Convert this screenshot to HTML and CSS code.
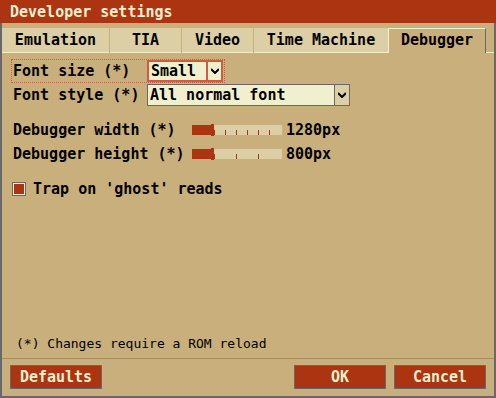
FILE: index.html
```html
<!DOCTYPE html>
<html lang="en">
<head>
  <meta charset="UTF-8" />
  <title>Developer settings</title>
  <link rel="stylesheet" href="styles.css">
</head>
<body>

  <div class="dialog">
    <div class="titlebar">Developer settings</div>

    <div class="frame">
      <div class="tabs">
        <div class="tab tab-emu">Emulation</div>
        <div class="tab tab-tia">TIA</div>
        <div class="tab tab-video">Video</div>
        <div class="tab tab-tm">Time Machine</div>
        <div class="tab tab-dbg active">Debugger</div>
        <div class="tab-fill"></div>
      </div>

      <div class="panel">
        <div class="row row-focus">
          <span class="label label-select">Font size (*)</span>
          <div class="select select-small focused">
            <span class="select-value">Small</span>
            <span class="select-arrow">
              <svg width="8" height="6" viewBox="0 0 8 6"><path d="M0 1 L4 5 L8 1" fill="none" stroke="#000" stroke-width="2"/></svg>
            </span>
          </div>
        </div>

        <div class="row row-style">
          <span class="label label-select">Font style (*)</span>
          <div class="select select-wide">
            <span class="select-value">All normal font</span>
            <span class="select-arrow">
              <svg width="8" height="6" viewBox="0 0 8 6"><path d="M0 1 L4 5 L8 1" fill="none" stroke="#000" stroke-width="2"/></svg>
            </span>
          </div>
        </div>

        <div class="row row-slider first-slider">
          <span class="label label-slider">Debugger width (*)</span>
          <div class="slider">
            <div class="ticks">
              <i></i><i></i><i></i><i></i><i></i><i></i><i></i>
            </div>
            <div class="fill" style="width:21px"></div>
            <div class="knob" style="left:19px"></div>
          </div>
          <span class="value">1280px</span>
        </div>

        <div class="row row-slider">
          <span class="label label-slider">Debugger height (*)</span>
          <div class="slider">
            <div class="ticks ticks-wide">
              <i></i><i></i><i></i>
            </div>
            <div class="fill" style="width:21px"></div>
            <div class="knob" style="left:19px"></div>
          </div>
          <span class="value">800px</span>
        </div>

        <div class="row row-check">
          <span class="checkbox"><span class="check-mark"></span></span>
          <span class="check-label">Trap on 'ghost' reads</span>
        </div>

        <p class="note">(*) Changes require a ROM reload</p>
      </div>

      <div class="footer">
        <button class="btn">Defaults</button>
        <div class="footer-right">
          <button class="btn">OK</button>
          <button class="btn">Cancel</button>
        </div>
      </div>
    </div>
  </div>

</body>
</html>
```

FILE: styles.css
```css
* { margin:0; padding:0; box-sizing:border-box; }
body { background:#c9af7c; font-family:'DejaVu Sans Mono', monospace; font-size:15px; font-weight:bold; color:#000; }

.dialog { width:496px; height:398px; display:flex; flex-direction:column; background:#c9af7c; }

.titlebar { height:23px; background:#ac3410; color:#f0f0cf; padding-left:10px; line-height:24px; }

.frame { flex:1; display:flex; flex-direction:column; border:2px solid #686868; border-top:none; }

/* Tabs */
.tabs { display:flex; gap:1px; margin-top:5px; height:25px; }
.tab { background:#dccfa5; border-bottom:1px solid #f0f0cf; text-align:center; line-height:25px; }
.tab-emu { width:107px; }
.tab-tia { width:71px; }
.tab-video { width:71px; }
.tab-tm { width:134px; }
.tab-dbg { width:98px; }
.tab.active { background:#c9af7c; border-bottom:none; border-top:1px solid #f0f0cf; border-left:1px solid #f0f0cf; border-right:1px solid #686868; margin-left:-1px; line-height:23px; }
.tab-fill { flex:1; border-bottom:1px solid #f0f0cf; margin-left:-1px; }

/* Panel */
.panel { flex:1; display:flex; flex-direction:column; padding:7px 0 0 10px; }
.row { display:flex; align-items:center; }
.row-focus { width:212px; outline:1px dotted #d55941; }
.row-style { margin-top:2px; }
.label { padding-left:1px; }
.label-select { width:135px; }
.label-slider { width:180px; }

.select { height:22px; display:flex; background:#f0f0cf; border:1px solid #686868; }
.select-small { width:76px; }
.select-wide { width:203px; }
.select-value { flex:1; padding-left:2px; line-height:20px; }
.select-arrow { width:15px; background:#dccfa5; display:flex; align-items:center; justify-content:center; border-left:1px solid #686868; }
.select.focused { border:2px solid #d55941; }
.select.focused .select-value { line-height:18px; }
.select.focused .select-arrow { background:#f0f0cf; border-left:2px solid #d55941; }

/* Sliders */
.row-slider { height:16px; }
.first-slider { margin-top:16px; }
.row-slider + .row-slider { margin-top:8px; }
.slider { position:relative; width:90px; height:10px; background:#dccfa5; }
.ticks { display:flex; align-items:flex-end; gap:10px; padding-left:11px; height:10px; }
.ticks i { width:1px; height:5px; background:#ac3410; }
.ticks-wide { gap:21px; padding-left:22px; }
.fill { position:absolute; left:0; top:0; height:10px; background:#ac3410; }
.knob { position:absolute; top:-1px; width:3px; height:12px; background:#ac3410; }
.ticks i:first-child { background:#f0f0cf; }
.ticks-wide i:first-child { background:#ac3410; }
.value { margin-left:4px; }

/* Checkbox */
.row-check { margin-top:19px; height:16px; }
.checkbox { width:14px; height:14px; border:1px solid #686868; padding:1px; background:#f0f0cf; display:flex; }
.check-mark { flex:1; background:#ac3410; }
.check-label { margin-left:7px; }

.note { margin-top:auto; padding-left:4px; font-size:13px; font-weight:normal; line-height:16px; margin-bottom:6px; }

/* Footer */
.footer { border-top:1px solid #a38c61; display:flex; justify-content:space-between; padding:6px 8px 7px 8px; }
.footer-right { display:flex; gap:8px; }
.btn { width:92px; height:24px; background:#ac3410; color:#f0f0cf; border:1px solid #686868; font-family:'DejaVu Sans Mono', monospace; font-size:15px; font-weight:bold; }
```
